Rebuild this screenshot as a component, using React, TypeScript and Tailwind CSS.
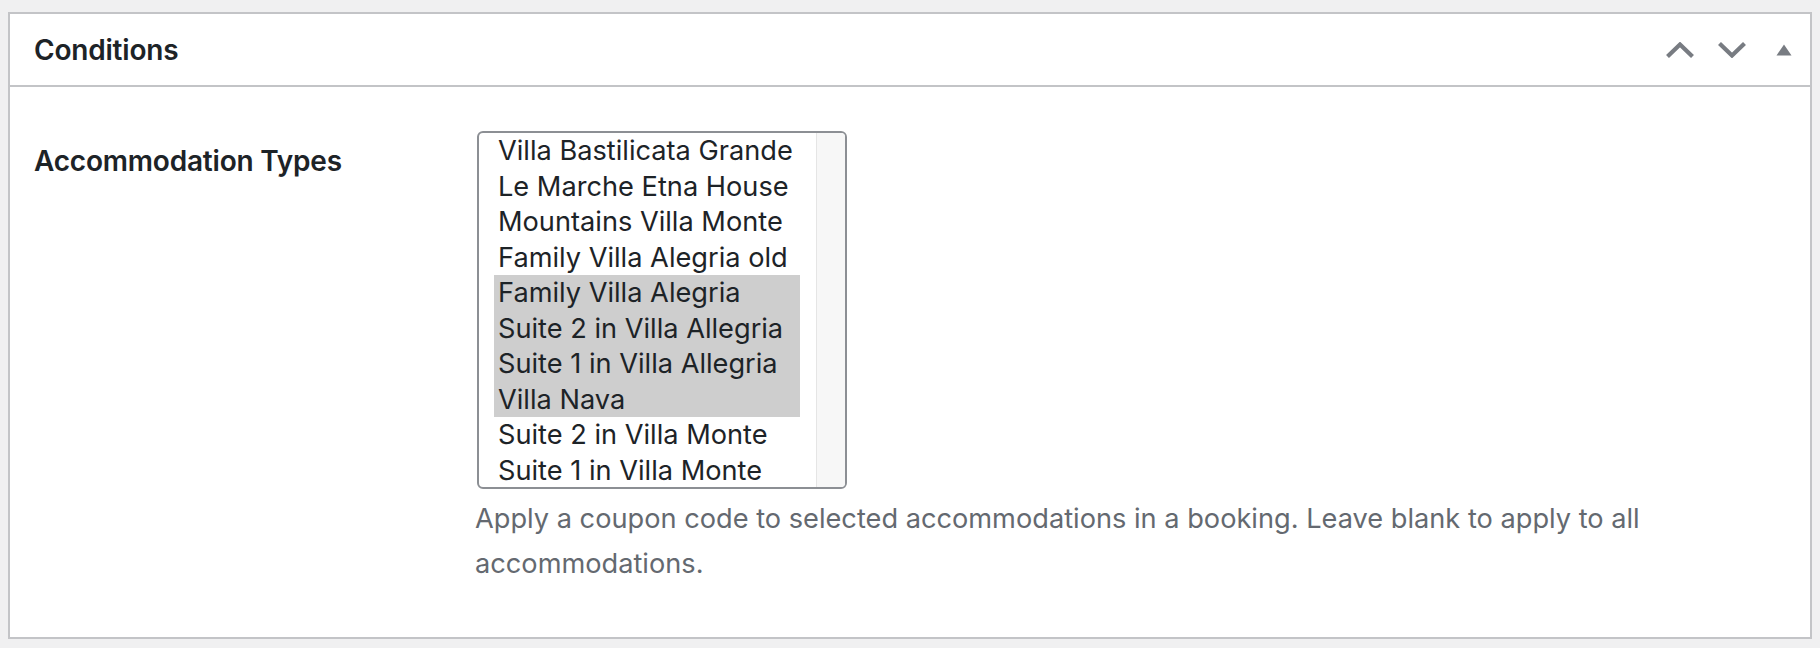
import React from "react";

const options = [
  { label: "Villa Bastilicata Grande", selected: false },
  { label: "Le Marche Etna House", selected: false },
  { label: "Mountains Villa Monte", selected: false },
  { label: "Family Villa Alegria old", selected: false },
  { label: "Family Villa Alegria", selected: true },
  { label: "Suite 2 in Villa Allegria", selected: true },
  { label: "Suite 1 in Villa Allegria", selected: true },
  { label: "Villa Nava", selected: true },
  { label: "Suite 2 in Villa Monte", selected: false },
  { label: "Suite 1 in Villa Monte", selected: false },
];

function ChevronUp() {
  return (
    <svg width="28" height="16" viewBox="0 0 28 16" fill="none">
      <path d="M1.5 14.5 L14 2.5 L26.5 14.5" stroke="#787c82" strokeWidth="4.2" />
    </svg>
  );
}

function ChevronDown() {
  return (
    <svg width="28" height="16" viewBox="0 0 28 16" fill="none">
      <path d="M1.5 1.5 L14 13.5 L26.5 1.5" stroke="#787c82" strokeWidth="4.2" />
    </svg>
  );
}

function Triangle() {
  return (
    <svg width="16" height="12" viewBox="0 0 16 12">
      <path d="M8 0.5 L15.5 11.5 L0.5 11.5 Z" fill="#787c82" />
    </svg>
  );
}

export default function App() {
  return (
    <div
      className="min-h-[648px] w-full bg-[#f0f0f1] px-[8px] pt-[12px]"
      style={{ fontFamily: "Inter, 'Noto Sans', sans-serif" }}
    >
      <div className="h-[627px] w-[1804px] border-2 border-[#c3c4c7] bg-white">
        <div className="flex h-[73px] items-center justify-between border-b-2 border-[#c3c4c7] pl-[24px]">
          <h2 className="text-[28px] font-semibold tracking-[-0.2px] text-[#1d2327]">Conditions</h2>
          <div className="flex h-full items-center">
            <button type="button" className="flex h-full w-[52px] items-center justify-center">
              <ChevronUp />
            </button>
            <button type="button" className="flex h-full w-[52px] items-center justify-center">
              <ChevronDown />
            </button>
            <button type="button" className="flex h-full w-[52px] items-center justify-center">
              <Triangle />
            </button>
          </div>
        </div>

        <div className="grid grid-cols-[443px_1fr] pl-[24px] pt-[44px]">
          <div className="pt-[10px] text-[28px] font-semibold leading-[40px] tracking-[-0.2px] text-[#1d2327]">
            Accommodation Types
          </div>
          <div>
            <div className="flex h-[358px] w-[370px] overflow-hidden rounded-[6px] border-2 border-[#8c8f94]">
              <ul className="flex-1 pl-[15px] pr-[16px]">
                {options.map((o) => (
                  <li
                    key={o.label}
                    className={`h-[35.5px] whitespace-nowrap pl-[4px] text-[27.2px] leading-[35.5px] text-[#1d2327] ${
                      o.selected ? "bg-[#cecece]" : ""
                    }`}
                  >
                    {o.label}
                  </li>
                ))}
              </ul>
              <div className="w-[29px] border-l border-[#e5e5e5] bg-[#f7f7f7]" />
            </div>
            <p className="ml-[-2px] mt-[7px] max-w-[1300px] text-[27.2px] leading-[45px] text-[#646970]">
              Apply a coupon code to selected accommodations in a booking. Leave blank to apply to all accommodations.
            </p>
          </div>
        </div>
      </div>
    </div>
  );
}
